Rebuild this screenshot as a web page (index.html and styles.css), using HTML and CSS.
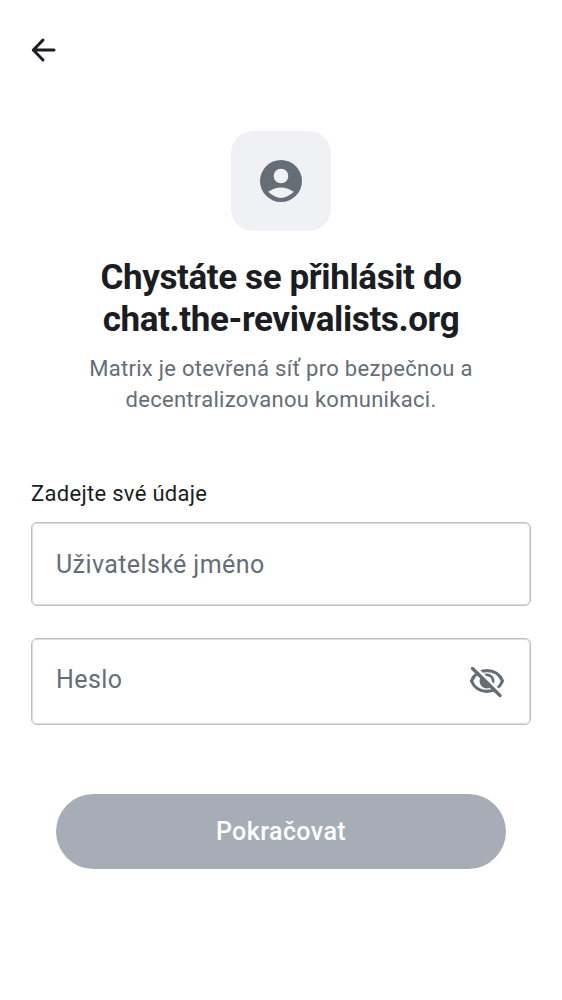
FILE: index.html
```
<!DOCTYPE html>
<html lang="cs">
<head>
<meta charset="utf-8">
<title>Přihlášení</title>
<link rel="stylesheet" href="styles.css">
</head>
<body>
<main class="screen">
  <header class="topbar">
    <button class="back" aria-label="Zpět"><svg width="36" height="36" viewBox="0 0 36 36"><path d="M18 8 8.300 18l9.700 10M8.300 18h20.700" fill="none" stroke="currentColor" stroke-width="3" stroke-linecap="round" stroke-linejoin="round"/></svg></button>
  </header>
  <section class="intro">
    <div class="badge"><svg width="50" height="50" viewBox="0 0 50 50"><circle cx="25" cy="25" r="21" fill="currentColor"/><circle class="cutout" cx="25" cy="20" r="7.300"/><path class="cutout" d="M12.200 35.800Q25 27 37.800 35.800Q25 48 12.200 35.800z"/></svg></div>
    <h1 class="title">Chystáte se přihlásit do<br>chat.the-revivalists.org</h1>
    <p class="subtitle">Matrix je otevřená síť pro bezpečnou a<br>decentralizovanou komunikaci.</p>
  </section>
  <form class="form">
    <div class="label">Zadejte své údaje</div>
    <div class="field">Uživatelské jméno</div>
    <div class="field password"><span>Heslo</span><svg class="eye" width="38" height="38" viewBox="0 0 38 38" fill="none" stroke="currentColor" stroke-linecap="round"><path d="M3.500 18C6 11.500 12 7.700 19 7.700s13 3.800 15.500 10.300C32 24.500 26 28.300 19 28.300S6 24.500 3.500 18z" stroke-width="3.200"/><circle cx="19" cy="18" r="7.500" fill="currentColor" stroke="none"/><path class="gap" d="M19 14.200a4 4 0 0 1 3.800 3.800" stroke-width="2"/><path class="gap" d="M7.200 4 34 30.500" stroke-width="2.500"/><path d="M4.500 5.500 32 32.500" stroke-width="3.400"/></svg></div>
    <button class="submit" type="button">Pokračovat</button>
  </form>
</main>
</body>
</html>
```
FILE: styles.css
```
* { box-sizing: border-box; }
body { margin: 0; background: #fff; font-family: Roboto, sans-serif; color: #1b1d22; }
.screen { height: 1000px; }
.topbar { height: 100px; padding: 32px 0 0 25px; }
.back { display: block; width: 36px; height: 36px; padding: 0; border: 0; background: none; color: inherit; }
.intro { display: flex; flex-direction: column; align-items: center; padding-top: 31px; text-align: center; }
.badge { display: grid; place-items: center; width: 100px; height: 100px; border-radius: 22px; background: #f0f1f5; color: #656d77; }
.cutout { fill: #f0f1f5; }
.title { margin: 26px 0 0; font-size: 35px; line-height: 42px; font-weight: 700; letter-spacing: -.38px; color: #1b1d22; }
.subtitle { margin: 12px 0 0; font-size: 22px; line-height: 31px; letter-spacing: .29px; color: #656d77; }
.form { display: flex; flex-direction: column; padding: 63px 31px 0; }
.label { margin-bottom: 13px; font-size: 22px; line-height: 31px; letter-spacing: .3px; }
.field { display: flex; align-items: center; height: 84px; padding: 0 24px; border: 1px solid #b9bfcb; border-radius: 6px; box-shadow: inset 0 0 0 1px #dcdfe5; font-size: 25px; letter-spacing: .4px; color: #656d77; }
.password { justify-content: space-between; height: 87px; margin-top: 32px; padding-bottom: 4px; }
.eye { margin-top: 4px; }
.gap { stroke: #fff; }
.submit { height: 75px; margin: 69px 25px 0; border: 0; border-radius: 38px; background: #a6adb7; color: #fff; font: 500 25px Roboto, sans-serif; letter-spacing: .42px; }
```
